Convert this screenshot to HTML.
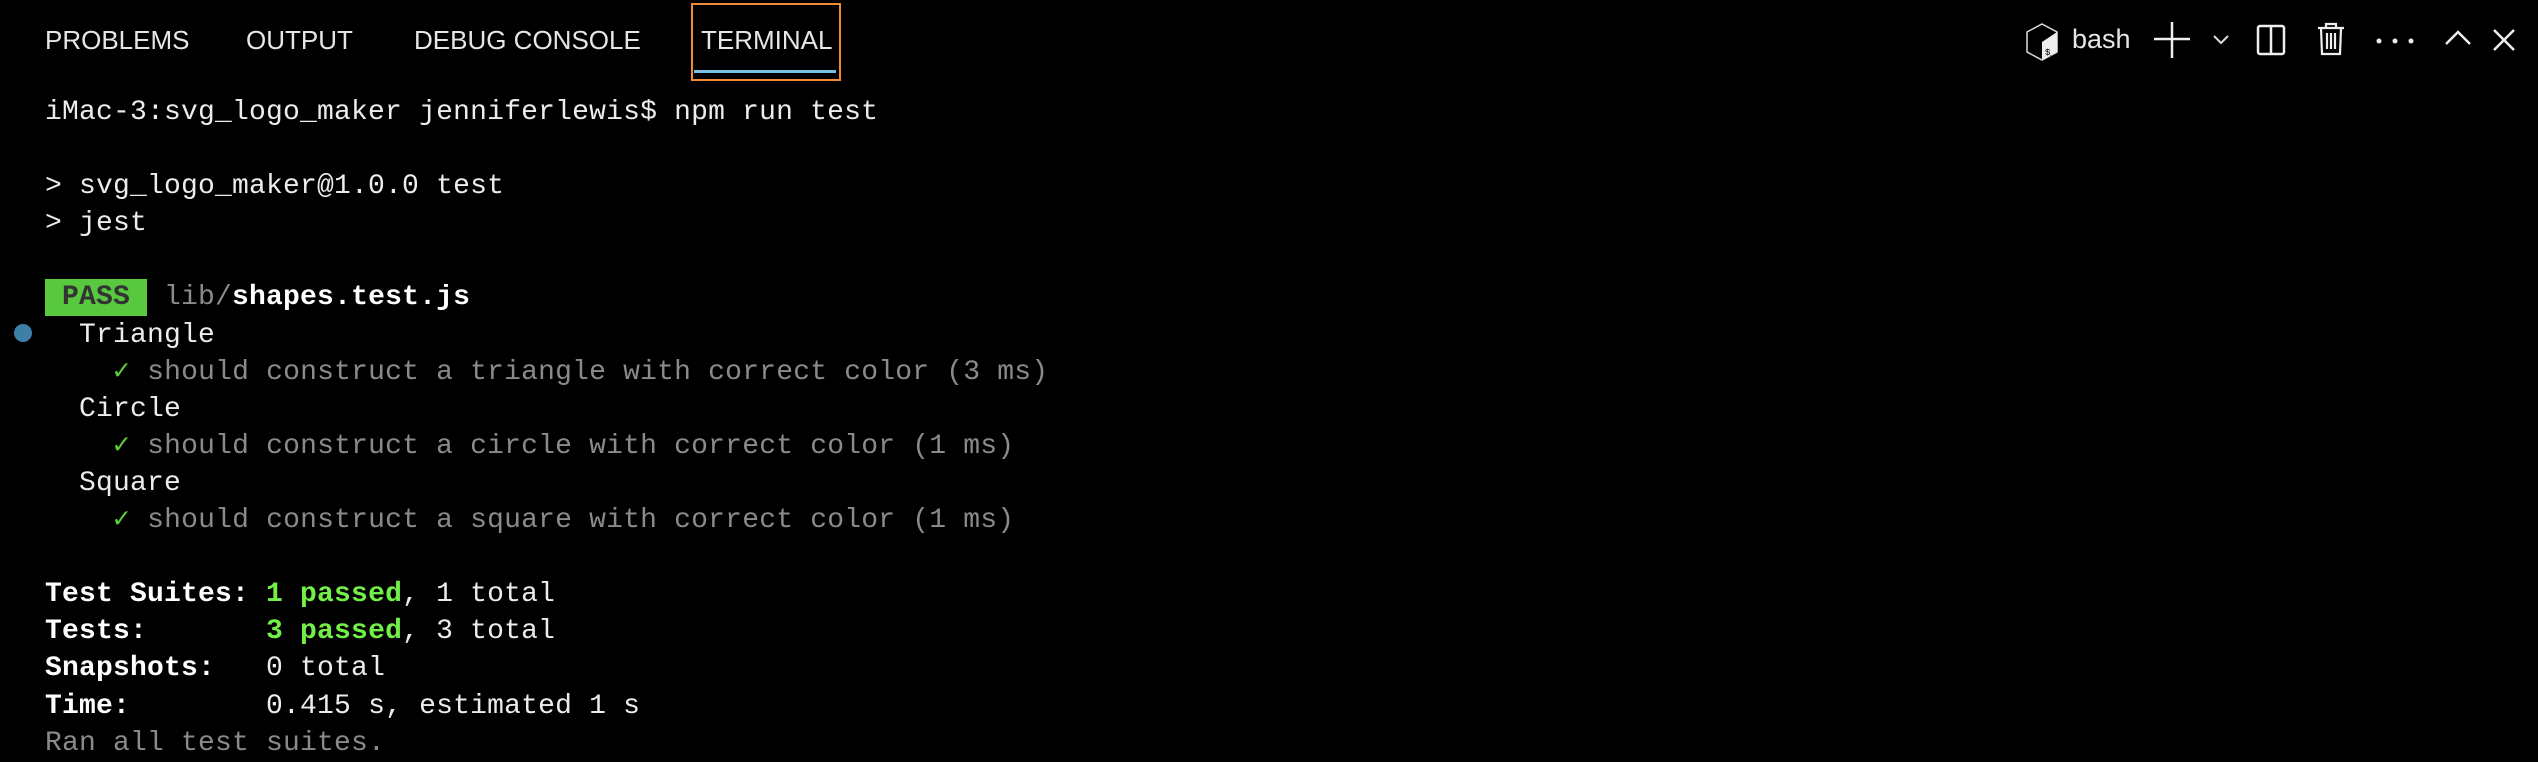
<!DOCTYPE html>
<html><head><meta charset="utf-8"><style>
html,body{margin:0;padding:0;background:#000;width:2538px;height:762px;overflow:hidden}
.tab{position:absolute;top:24px;font:26px "Liberation Sans",sans-serif;color:#e6e6e6;line-height:32px}
.term{position:absolute;left:45px;top:94px;font:28px "Liberation Mono",monospace;letter-spacing:0.2px;color:#ececec;line-height:37.1px;white-space:pre;margin:0}
.g{color:#8a8a8a}.b{font-weight:bold;color:#fff}.ck{color:#5ccf3a}.p{color:#72f048;font-weight:bold}
.pass{background:#58c93e;color:#333;font-weight:bold;display:inline-block;height:37px;line-height:37px;padding:0 17px 0 17px}
svg{position:absolute}
</style></head><body>
<div class="tab" style="left:45px">PROBLEMS</div>
<div class="tab" style="left:246px">OUTPUT</div>
<div class="tab" style="left:414px">DEBUG CONSOLE</div>
<div class="tab" style="left:701px">TERMINAL</div>
<div style="position:absolute;left:691px;top:3px;width:146px;height:74px;border:2px solid #f08a36"></div>
<div style="position:absolute;left:694px;top:70px;width:142px;height:3px;background:#7bbfe0"></div>

<svg style="left:2024px;top:22px" width="36" height="40" viewBox="0 0 36 40"><path d="M18 2 L33 10 L33 30 L18 38 L3 30 L3 10 Z" fill="none" stroke="#ddd" stroke-width="1.5"/><path d="M33 10 L33 30 L18 38 L18 20 Z" fill="#eee"/><text x="21" y="33" font-size="9" font-family="Liberation Mono" fill="#000">$_</text></svg>
<div class="tab" style="left:2072px;top:23px;font-size:27px">bash</div>
<svg style="left:2150px;top:22px" width="140" height="36"><path d="M4 17 H40 M22 0 V36" stroke="#eee" stroke-width="2.5" fill="none"/><path d="M64 14 L71 21 L78 14" stroke="#ddd" stroke-width="2" fill="none"/></svg>
<svg style="left:2256px;top:24px" width="30" height="32"><rect x="2" y="2" width="26" height="28" rx="2" fill="none" stroke="#eee" stroke-width="2.5"/><path d="M15 2 V30" stroke="#eee" stroke-width="2.5"/></svg>
<svg style="left:2316px;top:22px" width="30" height="34"><path d="M2 6 H28 M10 6 V2 H20 V6 M5 6 L6 32 H24 L25 6 M11 11 V27 M15 11 V27 M19 11 V27" stroke="#eee" stroke-width="2.2" fill="none"/></svg>
<svg style="left:2374px;top:36px" width="44" height="10"><circle cx="5" cy="5" r="2.5" fill="#eee"/><circle cx="21" cy="5" r="2.5" fill="#eee"/><circle cx="37" cy="5" r="2.5" fill="#eee"/></svg>
<svg style="left:2444px;top:30px" width="28" height="16"><path d="M2 14 L14 2 L26 14" stroke="#eee" stroke-width="2.5" fill="none"/></svg>
<svg style="left:2492px;top:28px" width="24" height="24"><path d="M2 2 L22 22 M22 2 L2 22" stroke="#eee" stroke-width="2.5" fill="none"/></svg>

<div style="position:absolute;left:14px;top:324px;width:18px;height:18px;border-radius:50%;background:#3e7fa8"></div>

<pre class="term">iMac-3:svg_logo_maker jenniferlewis$ npm run test

&gt; svg_logo_maker@1.0.0 test
&gt; jest

<span class="pass">PASS</span> <span class="g">lib/</span><span class="b">shapes.test.js</span>
  Triangle
    <span class="ck">✓</span> <span class="g">should construct a triangle with correct color (3 ms)</span>
  Circle
    <span class="ck">✓</span> <span class="g">should construct a circle with correct color (1 ms)</span>
  Square
    <span class="ck">✓</span> <span class="g">should construct a square with correct color (1 ms)</span>

<span class="b">Test Suites: </span><span class="p">1 passed</span>, 1 total
<span class="b">Tests:       </span><span class="p">3 passed</span>, 3 total
<span class="b">Snapshots:   </span>0 total
<span class="b">Time:        </span>0.415 s, estimated 1 s
<span class="g">Ran all test suites.</span></pre>
</body></html>
